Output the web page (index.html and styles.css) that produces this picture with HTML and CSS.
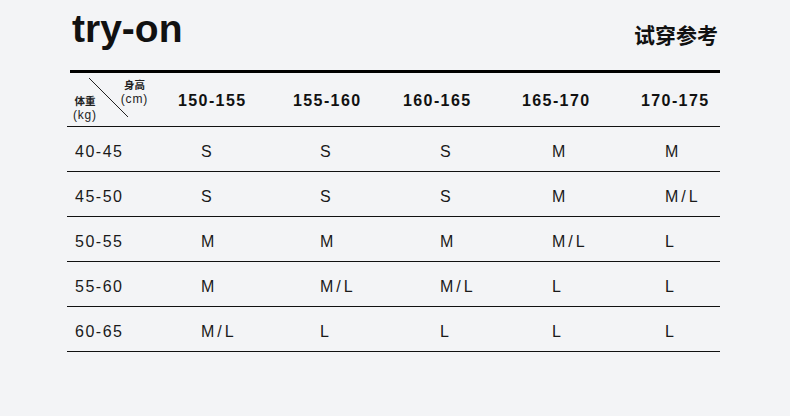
FILE: index.html
```html
<!DOCTYPE html>
<html lang="zh">
<head>
<meta charset="utf-8">
<link rel="stylesheet" href="styles.css">
</head>
<body>
<div class="page">
  <div class="top">
    <h1 class="title">try-on</h1>
    <div class="subtitle">试穿参考</div>
  </div>
  <div class="rule"></div>
  <div class="head">
    <div class="corner">
      <svg class="diag" width="111" height="54" viewBox="0 0 111 54"><line x1="22" y1="5" x2="61" y2="44" stroke="#222" stroke-width="1"/></svg>
      <div class="lbl lbl-w"><div class="zh">体重</div><div class="unit">(kg)</div></div>
      <div class="lbl lbl-h"><div class="zh">身高</div><div class="unit">(cm)</div></div>
    </div>
    <div class="hc">150-155</div>
    <div class="hc">155-160</div>
    <div class="hc">160-165</div>
    <div class="hc">165-170</div>
    <div class="hc">170-175</div>
    <div></div>
  </div>
  <div class="row"><div class="w">40-45</div><div class="s">S</div><div class="s">S</div><div class="s">S</div><div class="s">M</div><div class="s">M</div><div></div></div>
  <div class="row"><div class="w">45-50</div><div class="s">S</div><div class="s">S</div><div class="s">S</div><div class="s">M</div><div class="s">M/L</div><div></div></div>
  <div class="row"><div class="w">50-55</div><div class="s">M</div><div class="s">M</div><div class="s">M</div><div class="s">M/L</div><div class="s">L</div><div></div></div>
  <div class="row"><div class="w">55-60</div><div class="s">M</div><div class="s">M/L</div><div class="s">M/L</div><div class="s">L</div><div class="s">L</div><div></div></div>
  <div class="row"><div class="w">60-65</div><div class="s">M/L</div><div class="s">L</div><div class="s">L</div><div class="s">L</div><div class="s">L</div><div></div></div>
</div>
</body>
</html>
```
FILE: styles.css
```css
html, body {
  margin: 0;
  padding: 0;
  background: #f3f4f6;
}
body {
  font-family: "Liberation Sans", Arial, sans-serif;
  color: #1a1a1a;
}
.page {
  width: 653px;
  padding-left: 67px;
}
.top {
  height: 70px;
  display: flex;
  justify-content: space-between;
  align-items: flex-start;
}
.title {
  margin: 7px 0 0 5px;
  font-size: 39px;
  line-height: 44px;
  font-weight: 700;
  color: #111;
}
.subtitle {
  margin-top: 24px;
  margin-right: 2px;
  font-family: "Noto Sans CJK SC", sans-serif;
  font-size: 21px;
  line-height: 21px;
  font-weight: 700;
  color: #111;
}
.rule {
  height: 3px;
  margin-left: 3px;
  background: #000;
}
.head {
  display: grid;
  grid-template-columns: 111px 115px 110px 119px 119px 79px;
  height: 53px;
  border-bottom: 1px solid #111;
}
.corner {
  position: relative;
  display: flex;
  justify-content: space-between;
  padding: 4px 30px 4px 6px;
}
.diag {
  position: absolute;
  left: 0;
  top: 0;
}
.lbl {
  color: #222;
  text-align: center;
}
.zh {
  font-family: "Noto Sans CJK SC", sans-serif;
  font-size: 10.5px;
  line-height: 15px;
  font-weight: 700;
}
.unit {
  font-family: "Liberation Sans", sans-serif;
  font-size: 12px;
  line-height: 14px;
  letter-spacing: 0.8px;
}
.lbl-w {
  align-self: flex-end;
}
.lbl-h {
  align-self: flex-start;
}
.hc {
  padding-top: 3px;
  line-height: 50px;
  font-size: 16px;
  font-weight: 700;
  letter-spacing: 1.4px;
  color: #111;
}
.row {
  display: grid;
  grid-template-columns: 134px 119px 120px 112px 113px 55px;
  height: 44px;
  border-bottom: 1px solid #111;
}
.row > div {
  padding-top: 5px;
  line-height: 39px;
  font-size: 16px;
}
.w {
  padding-left: 8px;
  letter-spacing: 1.5px;
}
.s {
  letter-spacing: 3px;
}
```
